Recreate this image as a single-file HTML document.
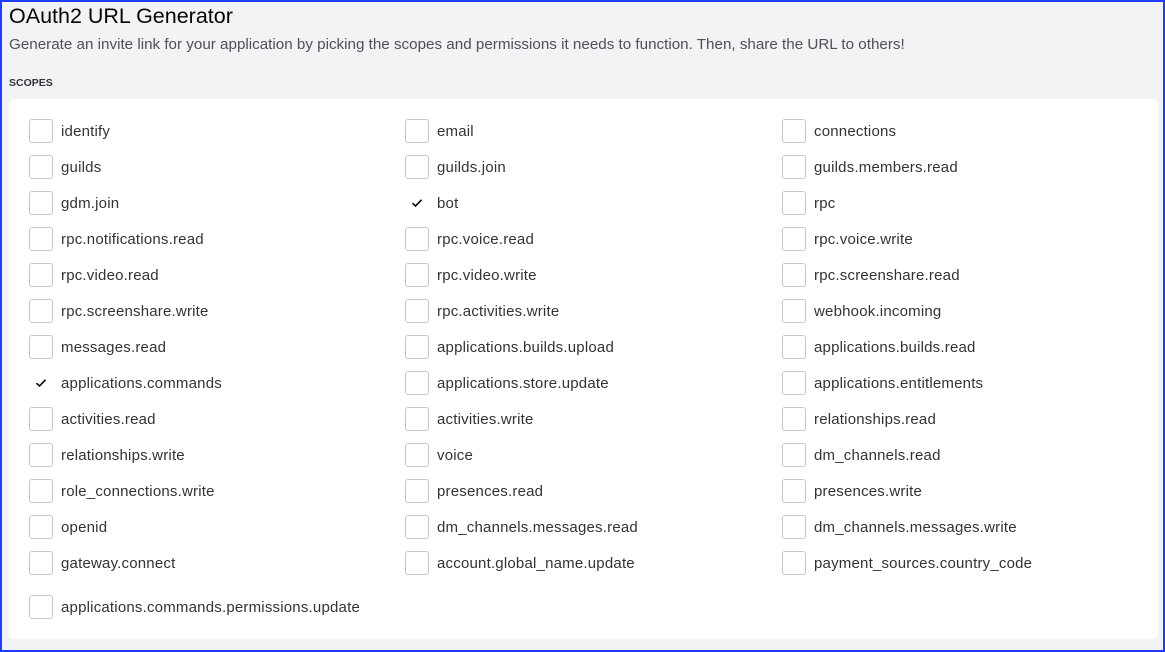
<!DOCTYPE html>
<html><head><style>
*{margin:0;padding:0;box-sizing:border-box}
body{width:1165px;height:652px;background:#f2f3f5;font-family:"Liberation Sans",sans-serif;color:#313338;position:relative;overflow:hidden}
.frame{position:absolute;inset:0;border:2px solid #1f3cff}
h1{position:absolute;left:9px;top:4px;font-size:21.5px;font-weight:normal;color:#060607}
.sub{position:absolute;left:9px;top:36px;font-size:15.2px;color:#4e5058}
.sc{position:absolute;left:9px;top:77px;font-size:10.5px;font-weight:bold;color:#313338}
.panel{position:absolute;left:9px;top:99px;width:1149px;height:540px;background:#fff;border-radius:5px}
.it{position:absolute;height:24px;display:flex;align-items:center;font-size:15px;letter-spacing:0.2px;color:#313338}
.cb{width:24px;height:24px;border:1px solid #c4c7cc;border-radius:3px;margin-right:8px;flex:none}
.ck{width:24px;height:24px;margin-right:8px;display:flex;align-items:center;justify-content:center;flex:none}
</style></head><body>
<h1>OAuth2 URL Generator</h1>
<div class="sub">Generate an invite link for your application by picking the scopes and permissions it needs to function. Then, share the URL to others!</div>
<div class="sc">SCOPES</div>
<div class="panel"></div>
<div id="c"></div>
<script>
var d=[["identify","email","connections"],["guilds","guilds.join","guilds.members.read"],["gdm.join","*bot","rpc"],["rpc.notifications.read","rpc.voice.read","rpc.voice.write"],["rpc.video.read","rpc.video.write","rpc.screenshare.read"],["rpc.screenshare.write","rpc.activities.write","webhook.incoming"],["messages.read","applications.builds.upload","applications.builds.read"],["*applications.commands","applications.store.update","applications.entitlements"],["activities.read","activities.write","relationships.read"],["relationships.write","voice","dm_channels.read"],["role_connections.write","presences.read","presences.write"],["openid","dm_channels.messages.read","dm_channels.messages.write"],["gateway.connect","account.global_name.update","payment_sources.country_code"],["applications.commands.permissions.update"]];
var xs=[29,405,782],h="";
d.forEach(function(r,i){var y=i<13?119+36*i:595;r.forEach(function(t,j){var c=t[0]=="*";if(c)t=t.slice(1);
h+='<div class="it" style="left:'+xs[j]+'px;top:'+y+'px">'+(c?'<span class="ck"><svg width="12" height="10" viewBox="0 0 12 10"><path d="M1.5 5.2L4.5 8L10.5 1.8" fill="none" stroke="#060607" stroke-width="1.6"/></svg></span>':'<span class="cb"></span>')+t+'</div>';});});
document.getElementById("c").innerHTML=h;
</script>
<div class="frame"></div>
</body></html>
